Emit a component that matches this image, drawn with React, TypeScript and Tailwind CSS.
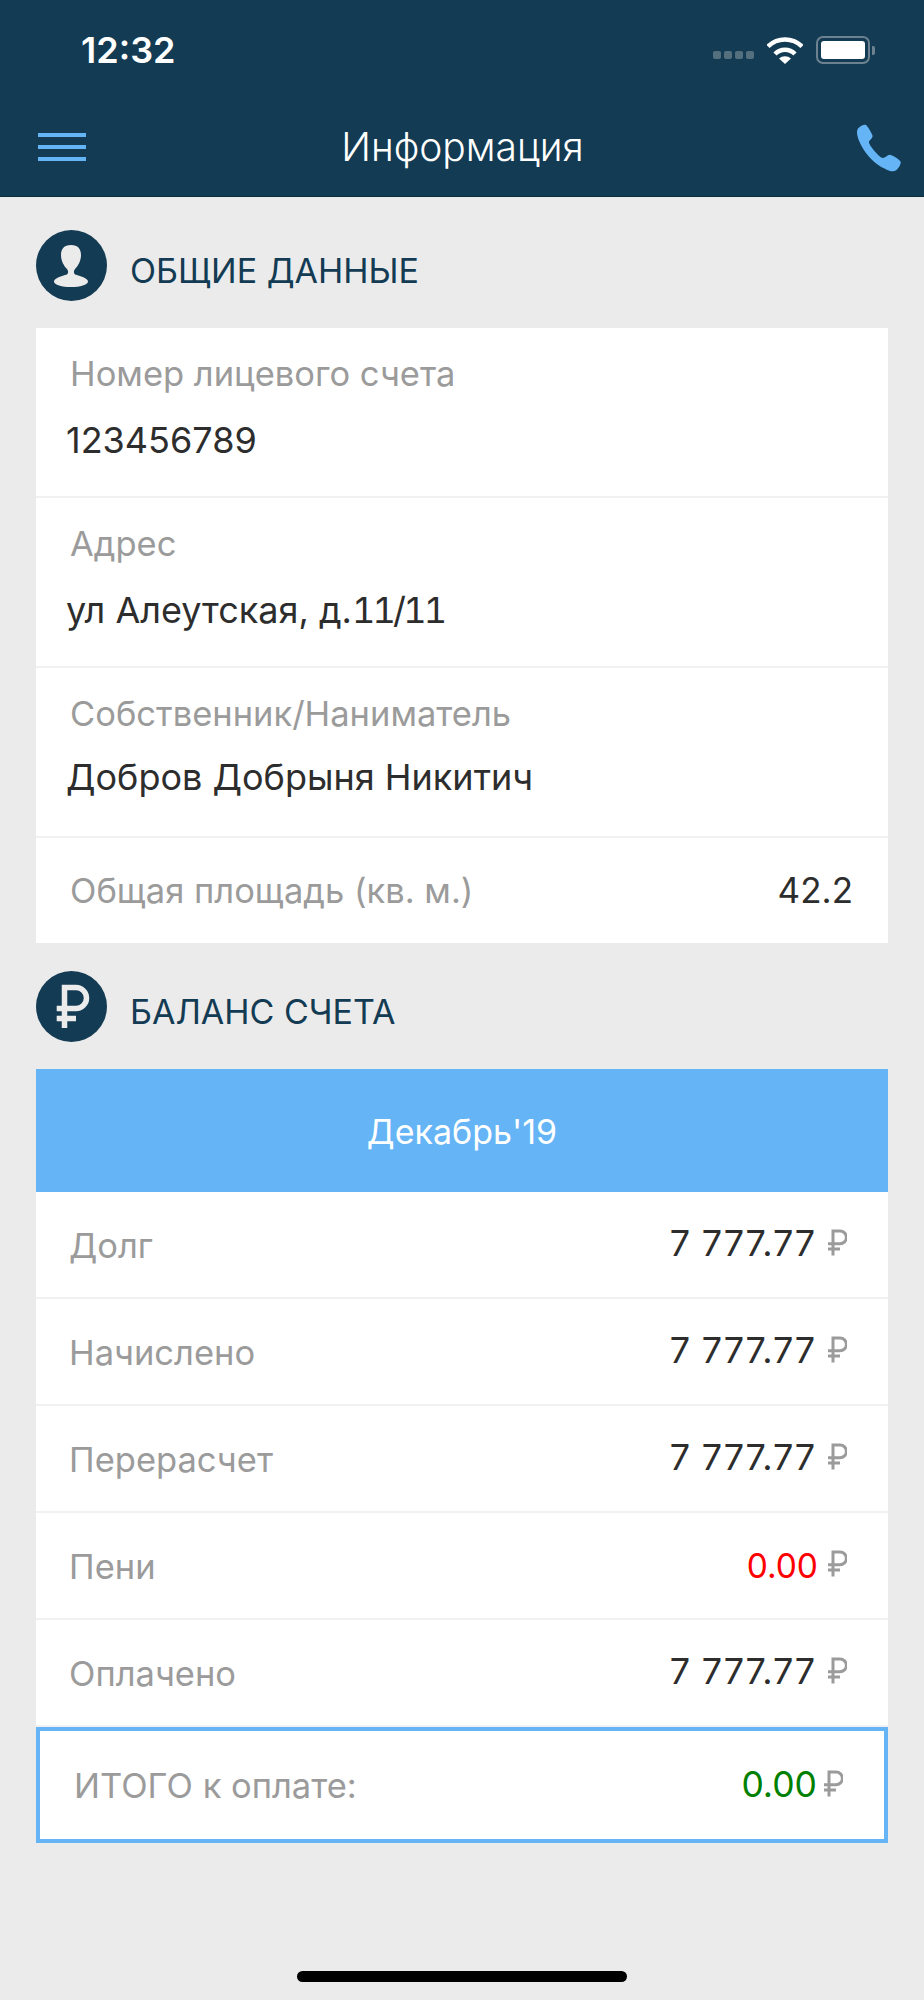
const inter = "font-['Inter',sans-serif]";

function PersonIcon() {
  return (
    <svg viewBox="0 0 71 71" className="w-[71px] h-[71px] shrink-0">
      <circle cx="35.500" cy="35.500" r="35.500" fill="#133b53" />
      <path
        d="M35 15C28 15 25 19 25 25C25 31 28 36 31 39C32.500 41 32.500 43 31 44.500C26 46 18 48 18 51.500C18 55 26 57 35 57C44 57 52 55 52 51.500C52 48 44 46 39 44.500C37.500 43 37.500 41 39 39C42 36 45 31 45 25C45 19 42 15 35 15z"
        fill="#ebebeb"
      />
    </svg>
  );
}

function RubleCircleIcon() {
  return (
    <svg viewBox="0 0 71 71" className="w-[71px] h-[71px] shrink-0">
      <circle cx="35.500" cy="35.500" r="35.500" fill="#133b53" />
      <path
        d="M28.500 57V16.500H40a10.500 10.500 0 0 1 0 21H20.700M20.700 47.500H40"
        fill="none"
        stroke="#ebebeb"
        strokeWidth="5.500"
      />
    </svg>
  );
}

function RubleSign({ className }: { className?: string }) {
  return (
    <svg viewBox="0 0 20 27" className={`w-[20px] h-[27px] ${className ?? ""}`}>
      <path d="M6 26.500V2H13a6.200 6.200 0 0 1 0 12.800H1M1 20H13" fill="none" stroke="#9b9b9b" strokeWidth="3" />
    </svg>
  );
}

function SectionTitle({ icon, title, className }: { icon: React.ReactNode; title: string; className: string }) {
  return (
    <div className={`flex items-center gap-[23px] ${className}`}>
      {icon}
      <span className="text-[#133b53] text-[34px] leading-none pt-[10px]">{title}</span>
    </div>
  );
}

function InfoRow({ label, value, valueClass }: { label: string; value: React.ReactNode; valueClass?: string }) {
  return (
    <div className="h-[170px] border-b-2 border-[#f1f1f1] pl-[30px] pt-[26px]">
      <div className="text-[#9b9b9b] text-[34.500px] leading-[40px] pl-[4px]">{label}</div>
      <div className={`text-[#2d2d2d] text-[36px] leading-[40px] ${valueClass ?? "mt-[26px]"}`}>{value}</div>
    </div>
  );
}

function BalanceRow({ label, value, valueClass }: { label: string; value: string; valueClass?: string }) {
  return (
    <div className="h-[107px] border-b-2 border-[#f1f1f1] last:border-b-0 flex items-center justify-between pl-[33px] pr-[41px]">
      <span className="text-[#9b9b9b] text-[34.500px] pt-[2px]">{label}</span>
      <div className="flex items-center gap-[11px]">
        <span className={valueClass ?? "text-[#2d2d2d] text-[36px] tracking-[0.8px] -mt-[3px]"}>{value}</span>
        <RubleSign className="-mt-[4px]" />
      </div>
    </div>
  );
}

export default function App() {
  const rows = [
    { label: "Долг", value: "7 777.77" },
    { label: "Начислено", value: "7 777.77" },
    { label: "Перерасчет", value: "7 777.77" },
    { label: "Пени", value: "0.00", valueClass: "text-[#ff0000] text-[33.500px] pt-[1px] -mr-[2px]" },
    { label: "Оплачено", value: "7 777.77" },
  ];

  return (
    <div className={`w-[924px] h-[2000px] bg-[#ebebeb] flex flex-col ${inter}`}>
      <header className="h-[197px] shrink-0 bg-[#133b53] border-b border-[#0d2c40]">
        <div className="h-[100px] flex items-start justify-between pl-[81px] pr-[49px] pt-[30px]">
          <span className="text-white text-[36px] leading-[40px] font-semibold">12:32</span>
          <div className="flex items-center gap-[13px] pt-[6px]">
            <div className="flex gap-[3px] mt-[9px]">
              <span className="w-[8px] h-[8px] rounded-[2px] bg-[#54707f]" />
              <span className="w-[8px] h-[8px] rounded-[2px] bg-[#54707f]" />
              <span className="w-[8px] h-[8px] rounded-[2px] bg-[#54707f]" />
              <span className="w-[8px] h-[8px] rounded-[2px] bg-[#54707f]" />
            </div>
            <svg viewBox="0 0 36 27" className="w-[36px] h-[27px]">
              <path d="M1 9.500a24 24 0 0 1 34 0" fill="none" stroke="#fff" strokeWidth="4.500" />
              <path d="M8 17a14 14 0 0 1 20 0" fill="none" stroke="#fff" strokeWidth="4.500" />
              <path d="M12 21.500a9 9 0 0 1 12 0L18 27z" fill="#fff" />
            </svg>
            <div className="flex items-center gap-[2px]">
              <div className="w-[54px] h-[28px] rounded-[7px] border-2 border-[#6c8290] p-[3px]">
                <div className="w-full h-full rounded-[3px] bg-white" />
              </div>
              <div className="w-[3px] h-[9px] rounded-r-[2px] bg-[#6c8290]" />
            </div>
          </div>
        </div>
        <nav className="h-[96px] grid grid-cols-[1fr_auto_1fr] items-center pl-[38px] pr-[21px]">
          <div className="flex flex-col gap-[8px] -mt-[3px]">
            <span className="block w-[48px] h-[4px] bg-[#64b4f6]" />
            <span className="block w-[48px] h-[4px] bg-[#64b4f6]" />
            <span className="block w-[48px] h-[4px] bg-[#64b4f6]" />
          </div>
          <span className="text-white text-[39px] font-light leading-none -mt-[4px] -translate-x-[8px]">Информация</span>
          <svg viewBox="0 0 48 48" className="w-[48px] h-[48px] justify-self-end">
            <path
              d="M3 4.500C5.500 1.500 9.500 0 11 1c2 1.500 5.500 8 6.500 10.500.8 2-2.500 4-3.500 6-.6 1.500 1.500 5 5 9s7 7.500 9 7.500c2 0 4.500-3 6.500-3.200 2.500 0 9.500 4.500 11 6.700 1 2-1.500 6.500-4 8.500-3 2.300-7 1.500-12-1.500C21 41 11 31 6 21 3 15 .5 8 3 4.500z"
              fill="#64b4f6"
            />
          </svg>
        </nav>
      </header>

      <main className="flex-1 px-[36px]">
        <SectionTitle icon={<PersonIcon />} title="ОБЩИЕ ДАННЫЕ" className="pt-[33px] pb-[27px]" />
        <section className="bg-white">
          <InfoRow label="Номер лицевого счета" value="123456789" />
          <InfoRow
            label="Адрес"
            value={
              <>
                ул Алеутская, д.<span className="tabular-nums tracking-[-2.800px]">11/11</span>
              </>
            }
          />
          <InfoRow label="Собственник/Наниматель" value="Добров Добрыня Никитич" valueClass="mt-[23px]" />
          <div className="h-[105px] flex items-center justify-between pl-[34px] pr-[35px]">
            <span className="text-[#9b9b9b] text-[34.500px]">Общая площадь (кв. м.)</span>
            <span className="text-[#2d2d2d] text-[35px]">42.2</span>
          </div>
        </section>

        <SectionTitle icon={<RubleCircleIcon />} title="БАЛАНС СЧЕТА" className="pt-[28px] pb-[27px]" />
        <section className="bg-white">
          <div className="h-[123px] bg-[#64b4f6] flex items-center justify-center text-white text-[34px] pt-[2px]">Декабрь'19</div>
          {rows.map((row) => (
            <BalanceRow key={row.label} {...row} />
          ))}
          <div className="h-[116px] border-[4px] border-[#64b4f6] flex items-center justify-between pl-[34px] pr-[41px]">
            <span className="text-[#9b9b9b] text-[34.500px] pt-[2px]">ИТОГО к оплате:</span>
            <div className="flex items-center gap-[6px]">
              <span className="text-[#008000] text-[35.500px]">0.00</span>
              <RubleSign className="-mt-[4px]" />
            </div>
          </div>
        </section>
      </main>

      <div className="h-[29px] shrink-0 flex justify-center">
        <div className="w-[330px] h-[11px] rounded-full bg-black" />
      </div>
    </div>
  );
}
